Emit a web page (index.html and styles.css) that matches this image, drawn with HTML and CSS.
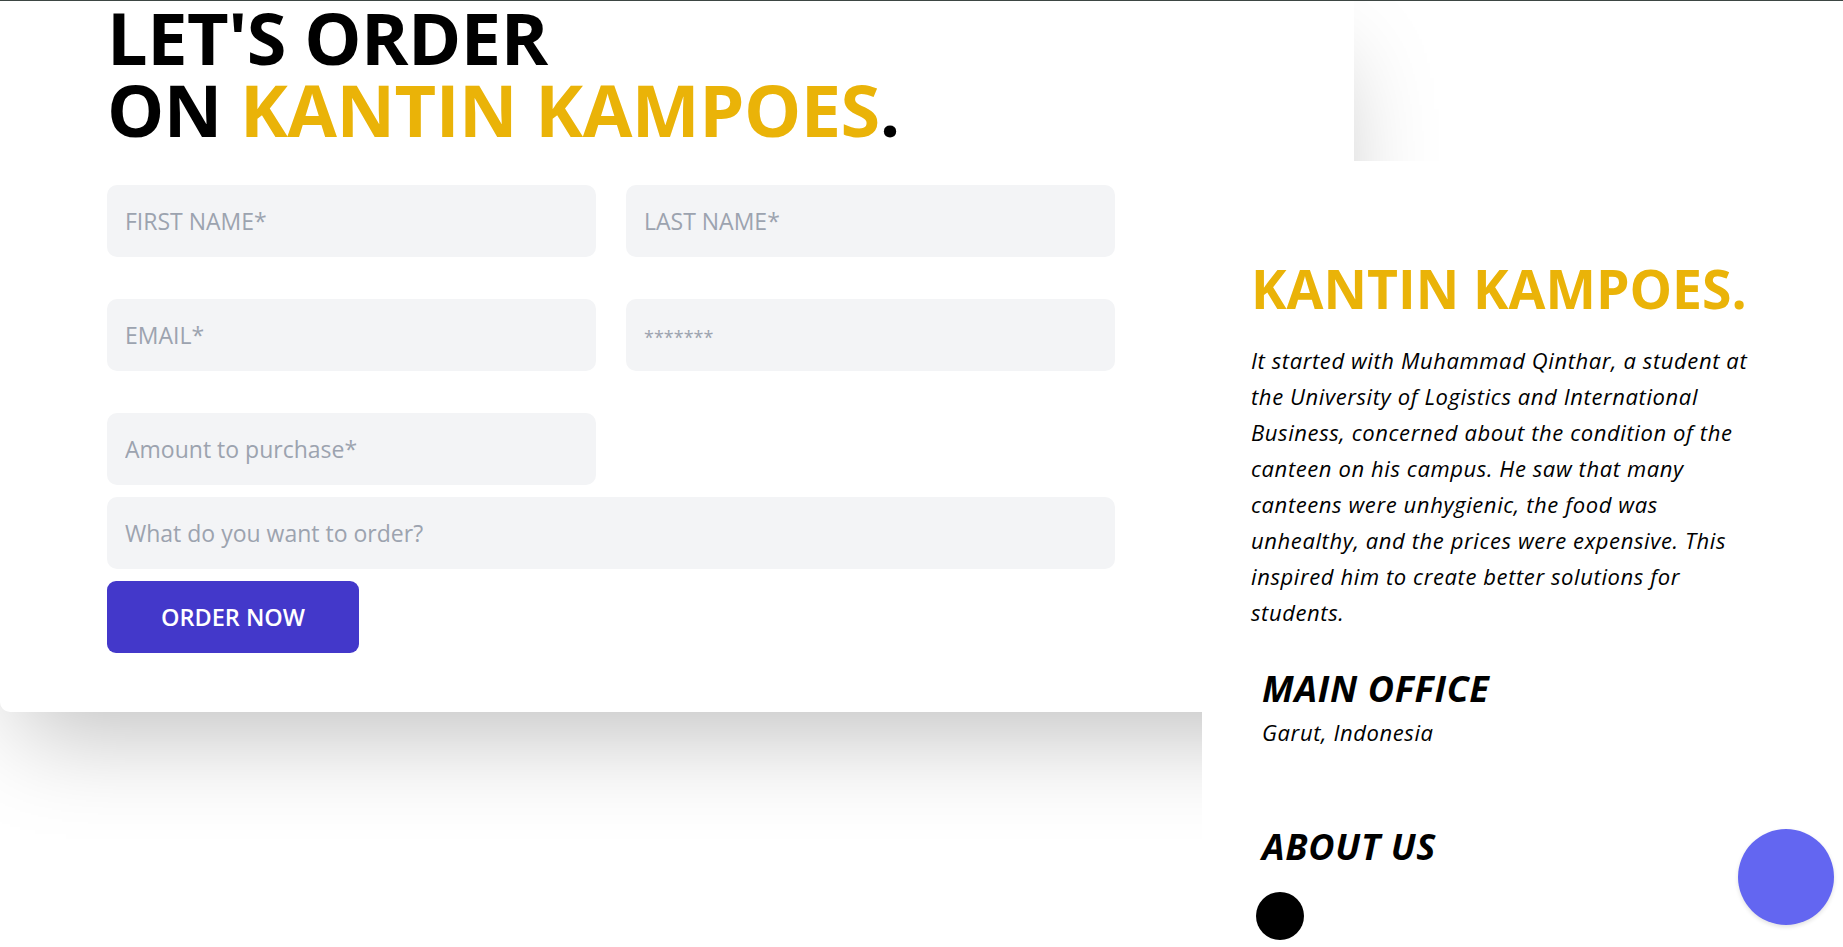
FILE: index.html
```html
<!DOCTYPE html>
<html lang="en">
<head>
<meta charset="utf-8">
<title>Kantin Kampoes - Order</title>
<link rel="stylesheet" href="styles.css">
</head>
<body>
<div class="topline"></div>
<section class="contact">
  <div class="card">
    <h1 class="title">LET'S ORDER<br>ON <span class="accent">KANTIN KAMPOES</span>.</h1>
    <form class="form">
      <div class="pair">
        <input class="field" type="text" placeholder="FIRST NAME*">
        <input class="field" type="text" placeholder="LAST NAME*">
      </div>
      <div class="pair">
        <input class="field" type="email" placeholder="EMAIL*">
        <input class="field field-pass" type="text" placeholder="*******">
      </div>
      <div class="pair">
        <input class="field" type="number" placeholder="Amount to purchase*">
      </div>
      <div class="single">
        <input class="field" type="text" placeholder="What do you want to order?">
      </div>
      <div class="actions">
        <button class="btn" type="button">ORDER NOW</button>
      </div>
    </form>
  </div>
  <aside class="info">
    <h2 class="brand">KANTIN KAMPOES.</h2>
    <p class="story">It started with Muhammad Qinthar, a student at the University of Logistics and International Business, concerned about the condition of the canteen on his campus. He saw that many canteens were unhygienic, the food was unhealthy, and the prices were expensive. This inspired him to create better solutions for students.</p>
    <div class="block">
      <h3 class="block-title">MAIN OFFICE</h3>
      <p class="block-text">Garut, Indonesia</p>
    </div>
    <div class="block about">
      <h3 class="block-title">ABOUT US</h3>
      <div class="socials"><span class="dot"></span></div>
    </div>
  </aside>
</section>
<button class="fab" type="button" aria-label="chat"></button>
</body>
</html>
```

FILE: styles.css
```css
* { box-sizing: border-box; }
html, body { margin: 0; padding: 0; }
body {
  background: #ffffff;
  font-family: "Open Sans", "Noto Sans", sans-serif;
  color: #000;
  overflow: hidden;
  height: 947px;
}
.topline { height: 1px; background: #3d4643; position: relative; z-index: 3; }

.contact {
  display: grid;
  grid-template-columns: 1202px 152px 1fr;
  grid-template-rows: 160px auto;
}

.card {
  grid-column: 1 / 3;
  grid-row: 1 / 3;
  align-self: start;
  background: #fff;
  border-radius: 0 0 10px 10px;
  box-shadow: 0 42px 92px -20px rgba(0, 0, 0, 0.25);
  padding: 0 0 59px 107px;
  position: relative;
  z-index: 1;
}

.title {
  margin: 0 0 40px;
  font-size: 72px;
  line-height: 72px;
  font-weight: 700;
  letter-spacing: -0.5px;
}
.accent { color: #eab308; }

.form { width: 1008px; display: flex; flex-direction: column; gap: 12px; }
.pair { display: grid; grid-template-columns: 489px 489px; column-gap: 30px; }
.pair + .pair { margin-top: 30px; }
.single { display: flex; }
.single .field { width: 100%; }

.field {
  height: 72px;
  width: 489px;
  border: 0;
  border-radius: 10px;
  background: #f3f4f6;
  padding: 0 18px;
  font-family: "Open Sans", "Noto Sans", sans-serif;
  font-size: 23px;
  color: #111;
  outline: none;
}
.field::placeholder { color: #9ca3af; }
.field-pass::placeholder { font-size: 18px; }

.actions { display: flex; }
.btn {
  width: 252px;
  height: 72px;
  border: 0;
  border-radius: 9px;
  background: #4338ca;
  color: #fff;
  font-family: "Open Sans", "Noto Sans", sans-serif;
  font-size: 23.5px;
  font-weight: 600;
  cursor: pointer;
}

.info {
  grid-column: 2 / 4;
  grid-row: 2;
  background: #fff;
  position: relative;
  z-index: 2;
  padding: 101px 60px 0 49px;
  min-height: 787px;
}
.brand {
  margin: 0;
  color: #eab308;
  font-size: 53.5px;
  line-height: 53px;
  font-weight: 700;
}
.story {
  margin: 27px 0 0;
  font-style: italic;
  font-size: 22px;
  letter-spacing: 0.6px;
  line-height: 36px;
  width: 512px;
}
.block { padding-left: 11px; margin-top: 39px; }
.block-title {
  margin: 0;
  font-size: 36px;
  letter-spacing: 0.7px;
  line-height: 40px;
  font-style: italic;
  font-weight: 700;
}
.block-text {
  margin: 8px 0 0;
  font-size: 22px;
  letter-spacing: 0.6px;
  line-height: 30px;
  font-style: italic;
}
.about { margin-top: 80px; }
.socials { margin-top: 25px; display: flex; gap: 12px; }
.dot { width: 48px; height: 48px; border-radius: 50%; background: #000; margin-left: -6px; }

.fab {
  position: fixed;
  right: 9px;
  bottom: 22px;
  width: 96px;
  height: 96px;
  border-radius: 50%;
  border: 0;
  background: #6366f1;
  box-shadow: 0 2px 4px rgba(0,0,0,0.12);
  z-index: 5;
}
```
